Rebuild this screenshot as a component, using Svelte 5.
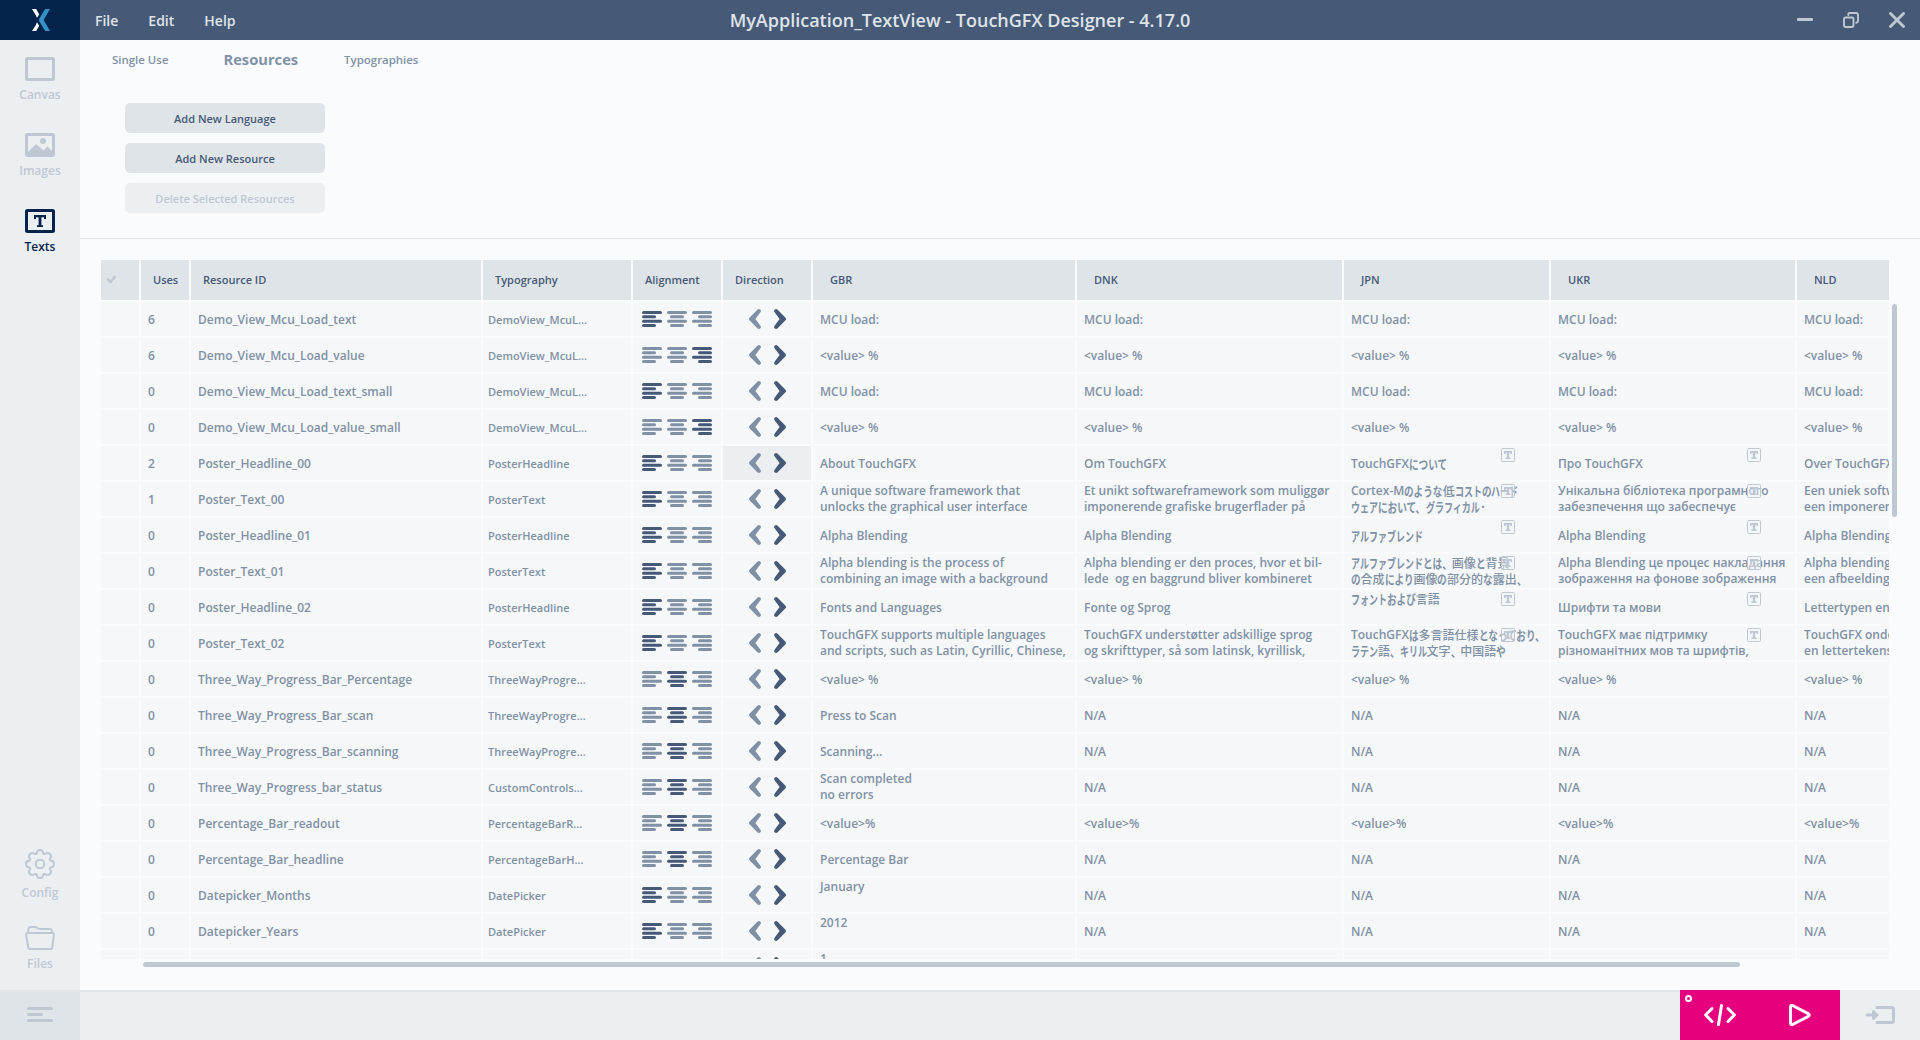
<script>
  const na = 'N/A';
  const mcu = ['MCU load:', 'MCU load:', 'MCU load:', 'MCU load:', 'MCU load:'];
  const val = Array(5).fill('<value> %');
  const pct = Array(5).fill('<value>%');
  const only = (t) => [t, na, na, na, na];
  // uses, id, typography, alignment (0 left, 1 centre, 2 right), texts per language
  const rows = [
    [6, 'Demo_View_Mcu_Load_text', 'DemoView_McuL...', 0, mcu],
    [6, 'Demo_View_Mcu_Load_value', 'DemoView_McuL...', 2, val],
    [0, 'Demo_View_Mcu_Load_text_small', 'DemoView_McuL...', 0, mcu],
    [0, 'Demo_View_Mcu_Load_value_small', 'DemoView_McuL...', 2, val],
    [2, 'Poster_Headline_00', 'PosterHeadline', 0, ['About TouchGFX', 'Om TouchGFX', 'TouchGFXについて', 'Про TouchGFX', 'Over TouchGFX']],
    [1, 'Poster_Text_00', 'PosterText', 0, ['A unique software framework that\nunlocks the graphical user interface', 'Et unikt softwareframework som muliggør\nimponerende grafiske brugerflader på', 'Cortex-Mのような低コストのハード\nウェアにおいて、グラフィカル･', 'Унікальна бібліотека програмного\nзабезпечення що забеспечує', 'Een uniek software\neen imponerende']],
    [0, 'Poster_Headline_01', 'PosterHeadline', 0, ['Alpha Blending', 'Alpha Blending', 'アルファブレンド', 'Alpha Blending', 'Alpha Blending']],
    [0, 'Poster_Text_01', 'PosterText', 0, ['Alpha blending is the process of\ncombining an image with a background', 'Alpha blending er den proces, hvor et bil-\nlede  og en baggrund bliver kombineret', 'アルファブレンドとは、画像と背景\nの合成により画像の部分的な露出、', 'Alpha Blending це процес накладання\nзображення на фонове зображення', 'Alpha blending is\neen afbeelding']],
    [0, 'Poster_Headline_02', 'PosterHeadline', 0, ['Fonts and Languages', 'Fonte og Sprog', 'フォントおよび言語\n ', 'Шрифти та мови', 'Lettertypen en']],
    [0, 'Poster_Text_02', 'PosterText', 0, ['TouchGFX supports multiple languages\nand scripts, such as Latin, Cyrillic, Chinese,', 'TouchGFX understøtter adskillige sprog\nog skrifttyper, så som latinsk, kyrillisk,', 'TouchGFXは多言語仕様となっており、\nラテン語、キリル文字、中国語や', 'TouchGFX має підтримку\nрізноманітних мов та шрифтів,', 'TouchGFX ondersteunt\nen lettertekens']],
    [0, 'Three_Way_Progress_Bar_Percentage', 'ThreeWayProgre...', 1, val],
    [0, 'Three_Way_Progress_Bar_scan', 'ThreeWayProgre...', 1, only('Press to Scan')],
    [0, 'Three_Way_Progress_Bar_scanning', 'ThreeWayProgre...', 1, only('Scanning...')],
    [0, 'Three_Way_Progress_bar_status', 'CustomControls...', 1, only('Scan completed\nno errors')],
    [0, 'Percentage_Bar_readout', 'PercentageBarR...', 1, pct],
    [0, 'Percentage_Bar_headline', 'PercentageBarH...', 1, only('Percentage Bar')],
    [0, 'Datepicker_Months', 'DatePicker', 0, only('January\n ')],
    [0, 'Datepicker_Years', 'DatePicker', 0, only('2012\n ')],
    ['', '', '', -1, ['1\n ', '', '', '', '']],
  ];
  const langs = ['GBR', 'DNK', 'JPN', 'UKR', 'NLD'];
  const alignX = [[0, 0, 0, 0], [0, 3, 0, 3], [0, 6, 0, 6]];
  const hasFontBadge = (r, c) => r >= 4 && r <= 9 && (c === 2 || c === 3);
  // kana are set in a condensed width, kanji and latin letters in their own
  const hira = /[\u3001-\u309f]/;
  const kata = /[\u30a0-\u30ff]/;
  const latin = /[\x20-\x7f]/;
  const runs = (line) => line.split(/([\u3001-\u309f]+|[\u30a0-\u30ff]+|[\x20-\x7f]+)/).filter(Boolean);
  const advance = (run) => (hira.test(run) ? 9.6 : kata.test(run) ? 9 : 0);
</script>

<div class="app">
  <header>
    <div class="logo">
      <svg width="18" height="22" viewBox="0 0 18 22">
        <path d="M0 0H4.2L7.2 5.4L4.9 9Q4.2 6.5 2.6 4.2ZM0 22H4.2L7.2 16.8L4.9 13.2Q4.2 15.7 2.6 18Z" fill="#fff" />
        <path d="M13.2 0H18L11.6 11L18 22H13.2L7.4 12.6Q6.6 11 7.4 9.4Z" fill="#3492c8" />
      </svg>
    </div>
    <nav><span>File</span><span>Edit</span><span>Help</span></nav>
    <h1>MyApplication_TextView - TouchGFX Designer - 4.17.0</h1>
    <div class="win">
      <svg width="16" height="16"><path d="M1.3 7.5H14.7" /></svg>
      <svg width="16" height="16"><path d="M2.5 5.5H8.8Q10.5 5.5 10.5 7V13Q10.5 15 8.8 15H2.7Q1 15 1 13.3V7Q1 5.5 2.5 5.5ZM5.3 3V2.3Q5.3 1 6.6 1H13Q15 1 15 3V8.5Q15 10.5 13.2 10.8" stroke-width="1.9" /></svg>
      <svg width="16" height="16"><path d="M1.5 1.5L14.5 14.5M14.5 1.5L1.5 14.5" stroke-width="2.9" /></svg>
    </div>
  </header>

  <div class="body">
    <aside>
      <div class="item">
        <svg width="30" height="24"><rect x="1.5" y="1.5" width="27" height="21" rx="1" stroke-width="3" /></svg>
        <span>Canvas</span>
      </div>
      <div class="item">
        <svg width="30" height="24"><rect x="1.5" y="1.5" width="27" height="21" rx="1" stroke-width="3" /><circle cx="18" cy="8" r="3" class="solid" /><path class="solid" d="M2 20L11 11L18.5 17.5L22.5 13.5L28 19V23H2Z" /></svg>
        <span>Images</span>
      </div>
      <div class="item active">
        <svg width="30" height="24"><rect x="1.5" y="1.5" width="27" height="21" rx="1" stroke-width="3" /><path class="solid" d="M9 6H21V10H19V8.2H16.4V16.2H18V18H12V16.2H13.6V8.2H11V10H9Z" /></svg>
        <span>Texts</span>
      </div>
      <div class="item config">
        <svg width="30" height="30" viewBox="0 0 30 30"><circle cx="15" cy="15" r="4.3" /><path d="M12.1 3.3C12.3 0.2 17.7 0.2 17.9 3.3C18.2 5.2 19.5 5.6 21.2 4.5C23.8 2.7 27.3 6.2 25.5 8.8C24.4 10.5 24.8 11.8 26.7 12.1C29.8 12.3 29.8 17.7 26.7 17.9C24.8 18.2 24.4 19.5 25.5 21.2C27.3 23.8 23.8 27.3 21.2 25.5C19.5 24.4 18.2 24.8 17.9 26.7C17.7 29.8 12.3 29.8 12.1 26.7C11.8 24.8 10.5 24.4 8.8 25.5C6.2 27.3 2.7 23.8 4.5 21.2C5.6 19.5 5.2 18.2 3.3 17.9C0.2 17.7 0.2 12.3 3.3 12.1C5.2 11.8 5.6 10.5 4.5 8.8C2.7 6.2 6.2 2.7 8.8 4.5C10.5 5.6 11.8 5.2 12.1 3.3Z" /></svg>
        <span>Config</span>
      </div>
      <div class="item files">
        <svg width="30" height="24"><path d="M3 7L3.4 3Q3.6 1 5.8 1H9Q11 1 12.5 2T16 3H24.5Q27 3 27 5.2V7M2.5 7H27.5Q29 7 28.9 8.6L27.3 21Q27 23 25 23H5.5Q3.5 23 3.2 21L1.1 8.6Q1 7 2.5 7Z" /></svg>
        <span>Files</span>
      </div>
    </aside>

    <main>
      <div class="tabs"><span>Single Use</span><b>Resources</b><span>Typographies</span></div>
      <div class="actions">
        <button>Add New Language</button>
        <button>Add New Resource</button>
        <button class="off">Delete Selected Resources</button>
      </div>
      <section>
        <div class="frame">
          <div class="table">
            <div class="row head">
              <div class="tick"><svg width="9" height="9"><path d="M1.2 4.6L3.6 7.2L7.8 1.6" /></svg></div>
              <div>Uses</div><div>Resource ID</div><div>Typography</div><div>Alignment</div><div>Direction</div>
              {#each langs as l}<div class="lang">{l}</div>{/each}
            </div>
            {#each rows as [uses, id, typo, align, texts], r}
              <div class="row">
                <div></div>
                <div>{uses}</div>
                <div>{id}</div>
                <div class="typo">{typo}</div>
                <div class="aligns">
                  {#if align >= 0}
                    {#each alignX as xs, a}
                      <svg width="20" height="16" class:on={a === align}>
                        {#each xs as x, i}<rect {x} y={i * 4.33} width={i % 2 ? 14 : 20} height="3" rx="1.5" />{/each}
                      </svg>
                    {/each}
                  {/if}
                </div>
                <div class="dirs" class:hover={r === 4}>
                  <svg width="12" height="20"><path d="M8.6 0.6Q10 -0.4 11.4 0.7Q12.3 1.7 11.6 3L6.4 10L11.6 17Q12.3 18.3 11.4 19.3Q10 20.4 8.6 19.4L0.5 11.3Q-0.4 10 0.5 8.7Z" /></svg>
                  <svg width="12" height="20" class="on"><path d="M3.4 0.6Q2 -0.4 0.6 0.7Q-0.3 1.7 0.4 3L5.6 10L0.4 17Q-0.3 18.3 0.6 19.3Q2 20.4 3.4 19.4L11.5 11.3Q12.4 10 11.5 8.7Z" /></svg>
                </div>
                {#each texts as t, c}
                  <div class="text" class:two={t.includes('\n')}>
                    {#if hasFontBadge(r, c) && c === 2}
                      <div class="jp">
                        {#each t.split('\n') as line}
                          <p>{#each runs(line) as run}{#if advance(run)}<span class="kana" class:kata={kata.test(run)} style:width="{run.length * advance(run)}px"><i>{run}</i></span>{:else}<span class:kanji={!latin.test(run)}>{run}</span>{/if}{/each}</p>
                        {/each}
                      </div>
                    {:else}
                      <p>{t}</p>
                    {/if}
                    {#if hasFontBadge(r, c)}
                      <svg class="badge" width="14" height="14"><rect x="0.5" y="0.5" width="13" height="13" rx="1" /><path d="M3 3H11V6H9.5V4.7H8.2V9.6H9.5V11H4.5V9.6H5.8V4.7H4.5V6H3Z" /></svg>
                    {/if}
                  </div>
                {/each}
              </div>
            {/each}
          </div>
          <div class="vbar"></div>
        </div>
        <div class="hbar"></div>
      </section>
    </main>
  </div>

  <footer>
    <div class="menu"><svg width="26" height="16"><path d="M1.5 1.5H24.5M1.5 7.5H14.5M1.5 13.5H24.5" /></svg></div>
    <div class="run">
      <div>
        <svg class="dot" width="9" height="9"><circle cx="4.5" cy="4.5" r="2.5" stroke-width="2" /></svg>
        <svg width="32" height="22"><path d="M8 4.5L1.6 11L8 17.5M24 4.5L30.4 11L24 17.5M17.5 1.5L14.5 20.5" stroke-width="3" /></svg>
      </div>
      <div><svg width="22" height="22"><path d="M1.5 3.2Q1.5 0.7 4 1.7L19.3 9.6Q21.3 11 19.3 12.4L4 20.3Q1.5 21.3 1.5 18.8Z" stroke-width="2.9" /></svg></div>
    </div>
    <div class="exit"><svg width="30" height="18"><path d="M10.8 1.5H26.5Q28.5 1.5 28.5 3.5V14.5Q28.5 16.5 26.5 16.5H10.8" stroke-linecap="butt" /><path class="solid" d="M1.5 7.5H7V5Q7.6 3.6 9 4.3L14 9L9 13.7Q7.6 14.4 7 13V10.5H1.5Q0 9 1.5 7.5Z" /></svg></div>
  </footer>
</div>

<style>
  :global(body) { background: #fafbfd; }
  .app {
    width: 1920px; height: 1040px; overflow: hidden;
    display: flex; flex-direction: column;
    font: 600 12px/16px "Open Sans", "Noto Sans CJK JP", sans-serif;
    color: #8191a5; background: #fafbfd;
  }
  svg { display: block; flex: none; fill: none; stroke-linecap: round; stroke-linejoin: round; }

  header { height: 40px; display: grid; grid-template-columns: 80px 600px 1fr 680px; align-items: center; background: #465a78; }
  .logo { height: 40px; display: flex; align-items: center; justify-content: center; background: #03234b; padding-left: 2px; box-sizing: border-box; }
  nav { display: flex; gap: 30px; padding: 2px 0 0 15px; font-size: 14px; color: #dfe4e8; }
  h1 { margin: 0; text-align: center; font-size: 18px; line-height: 24px; font-weight: 600; color: #dfe4e8; white-space: nowrap; }
  .win { display: flex; justify-content: flex-end; gap: 30px; padding-right: 15px; stroke: #bfc8d2; stroke-width: 2.8; }

  .body { flex: 1; display: flex; min-height: 0; }
  aside { width: 80px; display: flex; flex-direction: column; background: #ebeff2; padding-top: 17px; box-sizing: border-box; color: #bfc8d2; }
  .item { display: flex; flex-direction: column; align-items: center; gap: 5px; height: 76px; line-height: 17px; stroke: #bfc8d2; stroke-width: 2; }
  .item .solid { fill: #bfc8d2; stroke: none; }
  .item.active { color: #03234b; stroke: #03234b; }
  .item.active .solid { fill: #03234b; }
  .config { margin-top: auto; height: 77px; }
  .files { height: 64px; }

  main { flex: 1; min-width: 0; display: flex; flex-direction: column; }
  .tabs { display: flex; align-items: center; height: 40px; padding-left: 32px; font-size: 11.45px; }
  .tabs b { font-size: 14.7px; font-weight: 700; padding: 0 46px 2px 55px; }
  .actions { display: flex; flex-direction: column; gap: 10px; padding: 23px 45px 25px; border-bottom: 1px solid #dfe4e8; }
  button { width: 200px; height: 30px; border: 0; border-radius: 5px; background: #dfe4e8; color: #465a78; font: inherit; font-size: 11px; padding: 2px 0 0; }
  button.off { background: #ebeff2; color: #bfc8d2; }

  section { padding: 21px 0 0 21px; }
  .frame { display: flex; gap: 3px; height: 699px; }
  .table { width: 1788px; overflow: hidden; }
  .row {
    display: grid; width: 1850px; height: 34px; gap: 2px; margin-bottom: 2px;
    grid-template-columns: 38px 48px 290px 148px 88px 88px 262px 265px 205px 244px 154px;
  }
  .row > div { display: flex; align-items: center; background: #f5f7f9; padding: 1px 0 0 7px; white-space: pre; position: relative; }
  .row.head { height: 40px; color: #465a78; font-size: 11px; }
  .row.head > div { background: #dfe4e8; padding: 0 0 1px 12px; }
  .row.head > .lang { padding-left: 17px; }
  .row.head > .tick { padding-left: 6px; stroke: #bfc8d2; stroke-width: 2.4; }
  .row > .typo { padding-left: 5px; font-size: 11px; }
  .row > .aligns { gap: 5px; padding: 0 0 0 9px; }
  .aligns svg, .dirs svg { fill: #8191a5; }
  .aligns .on, .dirs .on { fill: #465a78; }
  .row > .dirs { gap: 13px; padding: 0 0 0 26px; }
  .row > .hover { background: #ebeff2; }
  .row > .text.two { padding-top: 0; }
  .text p { margin: 0; }
  .jp { white-space: normal; }
  .jp p { display: flex; height: 16px; white-space: pre; }
  .kanji { font-weight: 500; font-family: "Noto Sans CJK JP", sans-serif; }
  .kana { font-weight: 600; font-size: 13px; font-family: "Noto Sans CJK JP", sans-serif; }
  .kana i { display: block; width: max-content; font-style: normal; transform: scaleX(0.738); transform-origin: left; }
  .kana.kata i { transform: scaleX(0.692); }
  .row .badge { position: absolute; right: 34px; top: 2px; stroke: #bfc8d2; }
  .badge rect { fill: rgba(245, 247, 249, 0.45); }
  .badge path { fill: #bfc8d2; stroke: none; }
  .vbar { width: 5px; height: 213px; margin-top: 44px; border-radius: 3px; background: #bfc8d2; }
  .hbar { width: 1597px; height: 5px; margin: 3px 0 0 42px; border-radius: 3px; background: #bfc8d2; }

  footer { height: 50px; display: flex; background: #ebeff2; box-shadow: inset 0 2px #dfe4e8; }
  .menu { width: 80px; display: flex; align-items: center; justify-content: center; background: #dfe4e8; stroke: #bfc8d2; stroke-width: 3; }
  .run { margin-left: auto; display: flex; background: #e6007e; stroke: #fff; }
  .run > div { width: 80px; display: flex; align-items: center; justify-content: center; position: relative; }
  .dot { position: absolute; left: 4px; top: 4px; }
  .exit { width: 80px; display: flex; align-items: center; justify-content: center; background: #ebeff2; stroke: #bfc8d2; stroke-width: 3; }
  .exit .solid { fill: #bfc8d2; stroke: none; }
</style>
